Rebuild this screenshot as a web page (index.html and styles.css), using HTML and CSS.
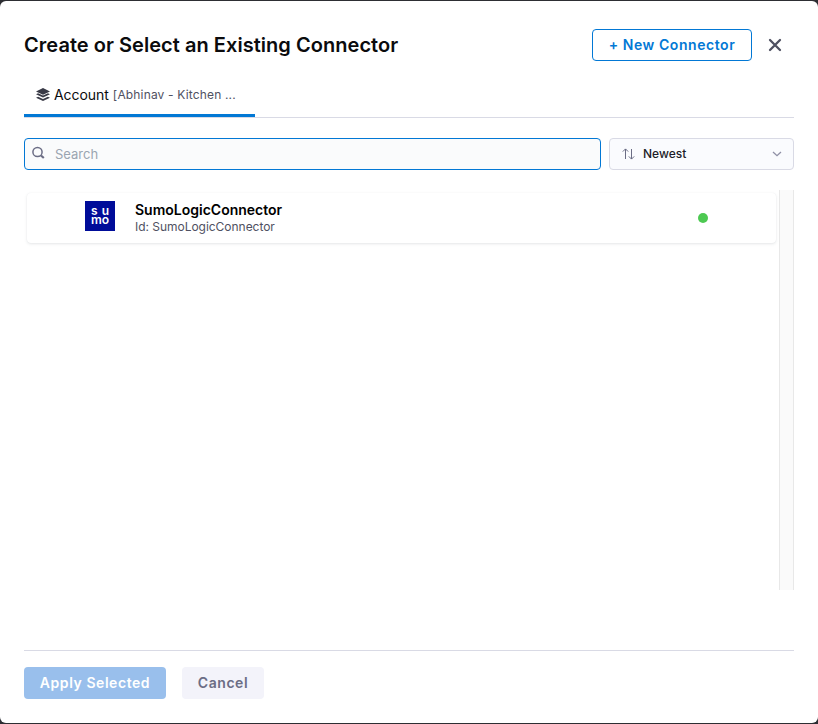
FILE: index.html
```html
<!DOCTYPE html>
<html lang="en">
<head>
<meta charset="utf-8">
<title>Create or Select an Existing Connector</title>
<link rel="stylesheet" href="styles.css">
</head>
<body>
<main class="dialog">
  <header class="header">
    <h1 class="title">Create or Select an Existing Connector</h1>
    <button class="btn btn-outline">+ New Connector</button>
    <button class="close" aria-label="Close">
      <svg width="14" height="14" viewBox="0 0 14 14"><path d="M2 2l10 10M12 2L2 12" stroke="#4f5162" stroke-width="2.3" stroke-linecap="round"/></svg>
    </button>
  </header>
  <nav class="tabs">
    <div class="tab">
      <svg class="layers" width="16" height="14" viewBox="0 0 16 14">
        <path d="M8 0.1L15 3.4 8 6.7 1 3.4z" fill="#383946"/>
        <path d="M1 6.2l2.1-1L8 7.5l4.900-2.300 2.100 1L8 9.500z" fill="#383946"/>
        <path d="M1 9.700l2.100-1L8 11l4.900-2.300 2.100 1L8 13z" fill="#383946"/>
      </svg>
      <span class="tab-name">Account</span>
      <span class="tab-scope">[Abhinav - Kitchen ...</span>
    </div>
  </nav>
  <div class="filters">
    <label class="search">
      <svg class="search-icon" width="14" height="14" viewBox="0 0 14 14" fill="none" stroke="#6b6d85"><circle cx="5.500" cy="6" r="4.600" stroke-width="1.500"/><path d="M9 9.500l2.800 2.500" stroke-width="2.200"/></svg>
      <input class="search-input" type="text" placeholder="Search">
    </label>
    <div class="sort">
      <svg width="13" height="12" viewBox="0 0 13 12" fill="none" stroke="#6b6d85"><path d="M3.500 11V1M.8 3.600L3.500.9l2.700 2.700M9.500 1v10M6.800 8.400l2.700 2.700 2.700-2.700"/></svg>
      <span class="sort-label">Newest</span>
      <svg width="10" height="6" viewBox="0 0 10 6" fill="none" stroke="#8f90a6" stroke-width="1.300"><path d="M1 1l4 3.700L9 1"/></svg>
    </div>
  </div>
  <section class="list">
    <div class="rows">
      <article class="row">
        <div class="logo">
          <div class="logo-line"><span>s</span><span>u</span></div>
          <div class="logo-line"><span>m</span><span>o</span></div>
        </div>
        <div class="info">
          <div class="name">SumoLogicConnector</div>
          <div class="id">Id: SumoLogicConnector</div>
        </div>
        <span class="status"></span>
      </article>
    </div>
    <div class="track"></div>
  </section>
  <footer class="footer">
    <button class="btn btn-primary">Apply Selected</button>
    <button class="btn btn-muted">Cancel</button>
  </footer>
</main>
</body>
</html>
```

FILE: styles.css
```css
* { box-sizing: border-box; }
body {
  margin: 0;
  padding: 1px 0;
  height: 724px;
  background: #2d2e33;
  font-family: Inter, sans-serif;
  overflow: hidden;
}
.dialog {
  display: flex;
  flex-direction: column;
  height: 722px;
  padding: 28px 24px 24px;
  background: #fff;
  border-radius: 6px;
}
.header { display: flex; align-items: center; height: 32px; }
.title {
  flex: 1;
  margin: 0;
  font-size: 20px;
  font-weight: 600;
  line-height: 32px;
  letter-spacing: 0.04px;
  color: #0b0b0d;
  white-space: nowrap;
}
button { font-family: inherit; }
.btn {
  height: 32px;
  padding: 0 0 2px;
  border: 0;
  border-radius: 4px;
  font-size: 14px;
  font-weight: 600;
  letter-spacing: 0.56px;
  white-space: nowrap;
}
.btn-outline { width: 160px; border: 1px solid #0278d5; background: #fff; color: #0278d5; }
.close {
  display: flex;
  width: 14px;
  height: 14px;
  margin: 0 12px 0 16px;
  padding: 0;
  border: 0;
  background: none;
}
.tabs { height: 57px; border-bottom: 1px solid #d9dae5; }
.tab {
  display: flex;
  align-items: center;
  width: 231px;
  height: 56px;
  padding: 14px 0 0 11px;
  border-bottom: 3px solid #0278d5;
  border-radius: 2px 2px 0 0;
  white-space: nowrap;
}
.layers { margin-right: 3px; }
.tab-name { font-size: 14px; color: #0b0b0d; letter-spacing: -0.05px; }
.tab-scope { margin-left: 4px; font-size: 12px; letter-spacing: 0.16px; color: #4f5162; }
.filters { display: flex; gap: 8px; margin-top: 20px; }
.search {
  display: flex;
  align-items: center;
  width: 577px;
  height: 32px;
  padding: 0 7px;
  border: 1px solid #0278d5;
  border-radius: 4px;
  background: #fafbfc;
}
.search-icon { margin-bottom: 2px; }
.search-input {
  flex: 1;
  margin-left: 9px;
  padding: 0;
  border: 0;
  outline: 0;
  background: transparent;
  font: 13px Inter, sans-serif;
}
.search-input::placeholder { color: #9aa5b1; opacity: 1; }
.sort {
  display: flex;
  align-items: center;
  width: 185px;
  height: 32px;
  padding: 0 11px 0 12px;
  border: 1px solid #d9dae5;
  border-radius: 4px;
  background: #fafbfe;
}
.sort-label { flex: 1; margin-left: 8px; padding-bottom: 2px; font-size: 12px; font-weight: 500; color: #1c1c28; }
.list { display: flex; height: 400px; margin-top: 20px; }
.rows { width: 755px; padding: 3px 3px 0; }
.row {
  display: flex;
  align-items: center;
  height: 50px;
  padding: 0 68px 0 58px;
  border-radius: 4px;
  background: #fff;
  box-shadow: 0 0 1px rgba(40, 41, 61, 0.06), 0 1px 3px rgba(96, 97, 112, 0.16);
}
.logo {
  width: 30px;
  height: 30px;
  margin-bottom: 4px;
  padding: 5px 6px 0;
  background: #000c99;
  color: #fff;
  font-size: 12px;
  font-weight: 600;
  line-height: 9px;
}
.logo-line { display: flex; justify-content: space-between; }
.info { flex: 1; margin: 0 0 2px 20px; }
.name { font-size: 14px; font-weight: 600; line-height: 18px; color: #000; }
.id { font-size: 12px; line-height: 15px; color: #4f5162; letter-spacing: -0.03px; }
.status { width: 10px; height: 10px; border-radius: 50%; background: #4dc952; }
.track {
  width: 15px;
  border-left: 1px solid #e8e8e8;
  border-right: 1px solid #e8e8e8;
  background: #fafafa;
}
.footer {
  display: flex;
  gap: 16px;
  margin-top: auto;
  padding-top: 16px;
  border-top: 1px solid #d9dae5;
}
.btn-primary { width: 142px; background: #99bfec; color: #fff; }
.btn-muted { width: 82px; background: #f3f3fa; color: #6b6d85; }
```
